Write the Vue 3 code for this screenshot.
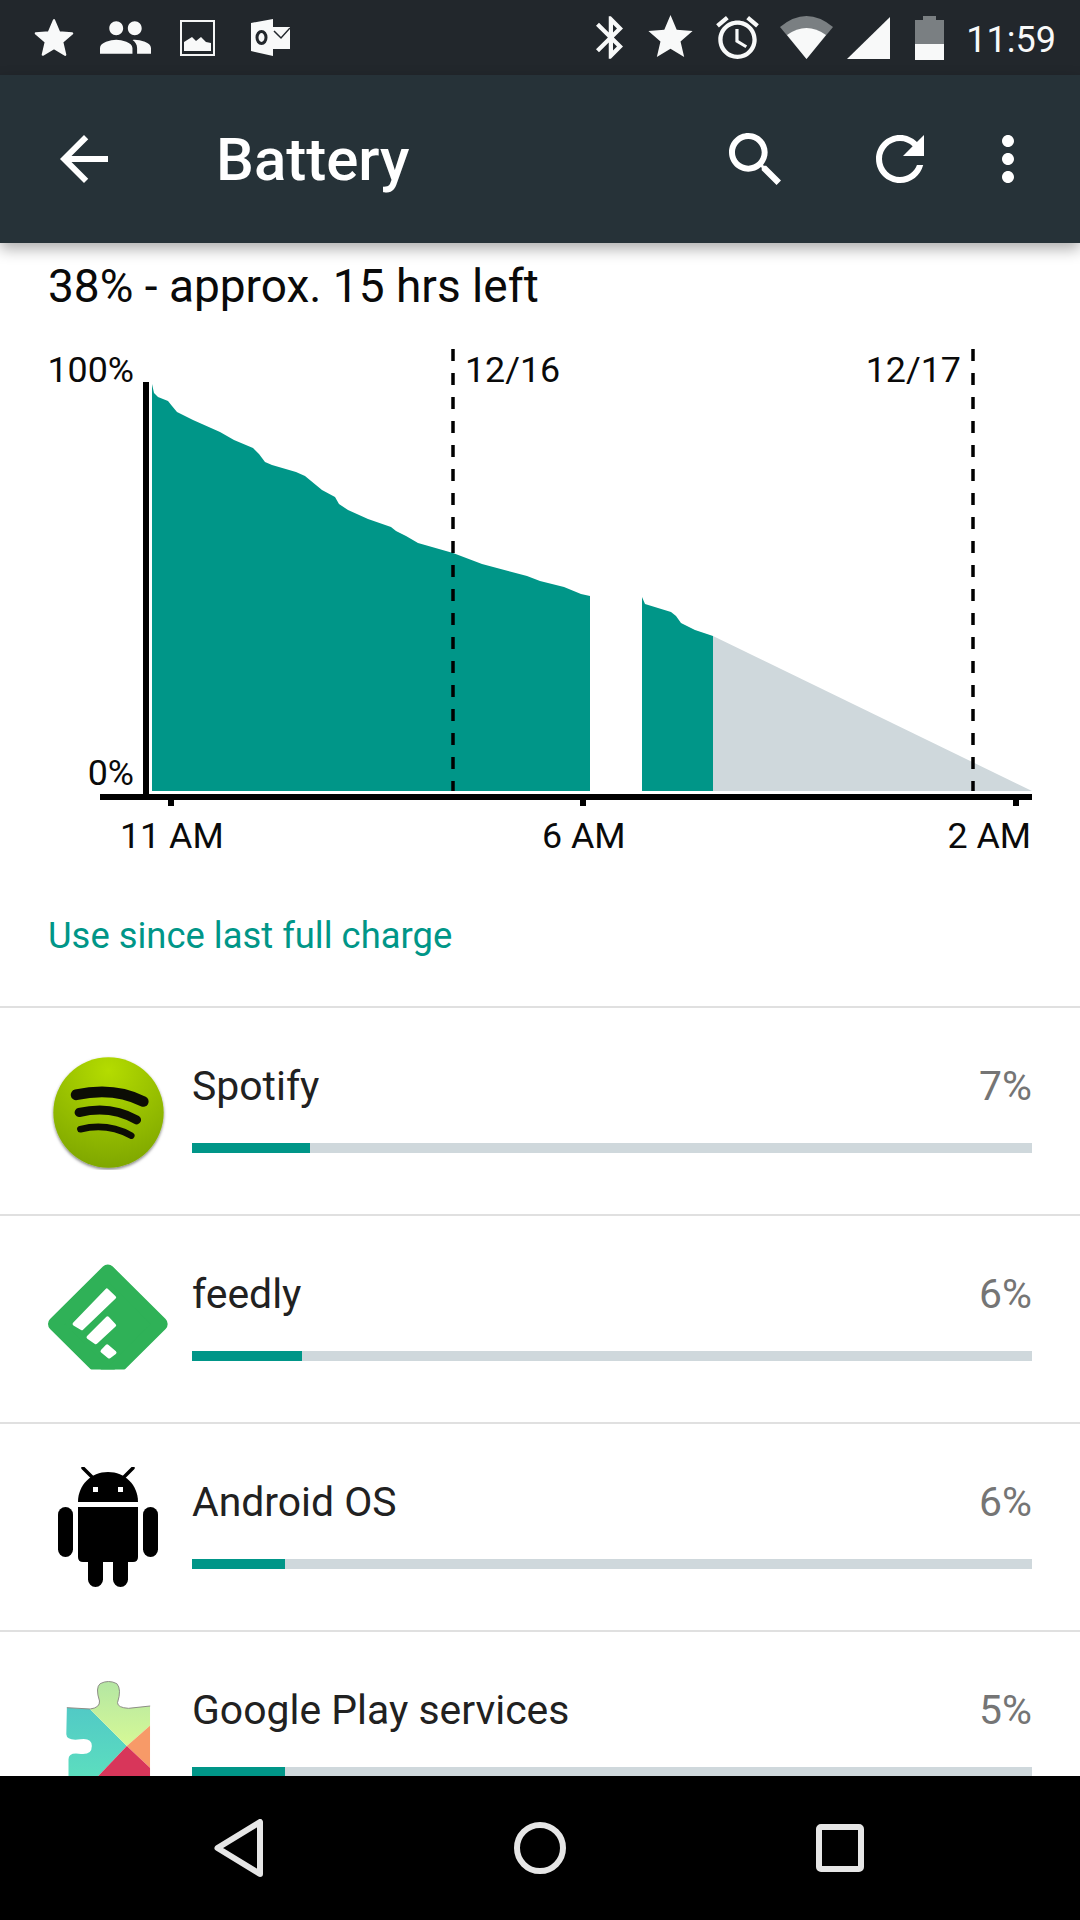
<script setup>
const apps = [
  { name: 'Spotify', pct: '7%', used: 118, icon: 'spotify' },
  { name: 'feedly', pct: '6%', used: 110, icon: 'feedly' },
  { name: 'Android OS', pct: '6%', used: 93, icon: 'android' },
  { name: 'Google Play services', pct: '5%', used: 93, icon: 'play' }
]
const curveA = '152,791 152,384 154,393 158,397 168,401 172,406 177,412 193,420 220,432 234,440 253,448 259,454 265,462 272,465 296,472 305,476 322,490 335,497 339,504 348,510 368,519 391,527 396,531 406,536 418,543 453,553 482,564 527,576 540,581 564,587 581,594 590,596 590,791'
const curveB = '642,791 642,597 645,604 671,612 676,616 681,623 695,630 713,636 713,791'
</script>

<template>
  <div class="phone">
    <header class="status">
      <svg class="s-star" viewBox="1 1 22 21"><path class="wh rounded" d="M12 17.27L18.18 21l-1.64-7.03L22 9.24l-7.19-.61L12 2 9.19 8.63 2 9.24l5.46 4.73L5.82 21z"/></svg>
      <svg class="s-people" viewBox="1 5 22 14"><path class="wh" d="M16 11c1.66 0 2.99-1.34 2.99-3S17.66 5 16 5c-1.66 0-3 1.34-3 3s1.34 3 3 3zm-8 0c1.66 0 2.99-1.34 2.99-3S9.66 5 8 5C6.34 5 5 6.34 5 8s1.34 3 3 3zm0 2c-2.33 0-7 1.17-7 3.5V19h14v-2.5c0-2.33-4.67-3.5-7-3.5zm8 0c-.29 0-.62.02-.97.05 1.16.84 1.97 1.97 1.97 3.45V19h6v-2.5c0-2.33-4.67-3.5-7-3.5z"/></svg>
      <svg class="s-image" viewBox="0 0 35 36"><rect x="1" y="1" width="33" height="34" fill="none" stroke="#f4f5f5" stroke-width="2"/><path class="wh" d="M4 31V22L12 17 16 21 21 17 26 22 31 23V31z"/></svg>
      <svg class="s-outlook" viewBox="0 0 39 37"><path class="wh" d="M0 4L22 0V37L0 32z"/><ellipse cx="10.500" cy="18.500" rx="4.500" ry="6" fill="none" stroke="#22272c" stroke-width="3"/><path class="wh" d="M22 8H39V30H22z"/><path d="M23 12L30 19 39 9" fill="none" stroke="#22272c" stroke-width="1.500"/></svg>
      <span class="spacer"></span>
      <svg class="s-bt" viewBox="5 2 12.710 20"><path class="wh" d="M17.710 7.710L12 2h-1v7.590L6.410 5 5 6.410 10.590 12 5 17.590 6.410 19 11 14.410V22h1l5.710-5.710-4.300-4.290 4.300-4.290zM13 5.830l1.880 1.880L13 9.590V5.830zm1.880 10.460L13 18.170v-3.760l1.880 1.880z"/></svg>
      <svg class="s-star2" viewBox="2 2 20 19"><path class="wh" d="M12 17.270L18.180 21l-1.640-7.030L22 9.240l-7.190-.61L12 2 9.190 8.630 2 9.240l5.460 4.730L5.820 21z"/></svg>
      <svg class="s-alarm" viewBox="2 1.860 20 20.140"><path class="wh" d="M22 5.720l-4.600-3.860-1.290 1.530 4.600 3.860L22 5.720zM7.880 3.390L6.600 1.860 2 5.710l1.290 1.530 4.590-3.850zM12.500 8H11v6l4.750 2.850.75-1.230-4-2.370V8zM12 4c-4.970 0-9 4.030-9 9s4.020 9 9 9c4.970 0 9-4.030 9-9s-4.030-9-9-9zm0 16c-3.870 0-7-3.130-7-7s3.130-7 7-7 7 3.130 7 7-3.130 7-7 7z"/></svg>
      <svg class="s-wifi" viewBox="0 0 53 43"><path class="dim" d="M0 11Q26.500 -11 53 11L26.500 43z"/><path class="wh" d="M7 19Q26.500 5 46 19L26.500 43z"/></svg>
      <svg class="s-signal" viewBox="0 0 43 42"><path class="wh" d="M0 42L43 0V42z"/></svg>
      <svg class="s-batt" viewBox="0 0 29 44"><path class="dim" d="M8 0H21V4H29V28H0V4H8z"/><path class="wh" d="M0 28H29V44H0z"/></svg>
      <span class="time">11:59</span>
    </header>

    <nav class="toolbar">
      <svg class="t-back" viewBox="4 4 16 16"><path class="wh2" d="M20 11H7.830l5.590-5.590L12 4l-8 8 8 8 1.410-1.410L7.830 13H20v-2z"/></svg>
      <h1 class="title">Battery</h1>
      <svg class="t-search" viewBox="3 3 17.490 17.490"><path class="wh2" d="M15.500 14h-.79l-.28-.27C15.410 12.590 16 11.110 16 9.500 16 5.910 13.090 3 9.500 3S3 5.910 3 9.500 5.910 16 9.500 16c1.610 0 3.090-.59 4.230-1.570l.27.28v.79l5 4.990L20.490 19l-4.990-5zm-6 0C7.010 14 5 11.990 5 9.500S7.010 5 9.500 5 14 7.010 14 9.500 11.990 14 9.500 14z"/></svg>
      <svg class="t-refresh" viewBox="4 4 16 16"><path class="wh2" d="M17.650 6.350C16.200 4.900 14.210 4 12 4c-4.420 0-7.990 3.580-7.990 8s3.570 8 7.990 8c3.730 0 6.840-2.550 7.730-6h-2.080c-.82 2.330-3.040 4-5.650 4-3.310 0-6-2.690-6-6s2.690-6 6-6c1.660 0 3.140.69 4.220 1.780L13 11h7V4l-2.350 2.350z"/></svg>
      <svg class="t-more" viewBox="10 4 4 16"><path class="wh2" d="M12 8c1.100 0 2-.9 2-2s-.9-2-2-2-2 .9-2 2 .9 2 2 2zm0 2c-1.100 0-2 .9-2 2s.9 2 2 2 2-.9 2-2-.9-2-2-2zm0 6c-1.100 0-2 .9-2 2s.9 2 2 2 2-.9 2-2-.9-2-2-2z"/></svg>
    </nav>

    <main class="content">
      <p class="summary">38% - approx. 15 hrs left</p>

      <svg class="chart" viewBox="0 340 1080 480">
        <polygon class="fill" :points="curveA"/>
        <polygon class="fill" :points="curveB"/>
        <polygon class="rest" points="713,636 1032,791 713,791"/>
        <line class="dash" x1="453" y1="349" x2="453" y2="791"/>
        <line class="dash" x1="973" y1="349" x2="973" y2="791"/>
        <rect x="143" y="382" width="6" height="414" class="ink"/>
        <rect x="100" y="794" width="932" height="6" class="ink"/>
        <rect x="168" y="800" width="6" height="6" class="ink"/>
        <rect x="580" y="800" width="6" height="6" class="ink"/>
        <rect x="1013" y="800" width="6" height="6" class="ink"/>
      </svg>
      <div class="axis-labels">
        <span class="lbl l-100">100%</span>
        <span class="lbl l-0">0%</span>
        <span class="lbl l-d1">12/16</span>
        <span class="lbl l-d2">12/17</span>
        <span class="lbl l-11">11 AM</span>
        <span class="lbl l-6">6 AM</span>
        <span class="lbl l-2">2 AM</span>
      </div>

      <p class="since">Use since last full charge</p>

      <ul class="list">
        <li v-for="app in apps" :key="app.name" class="row">
          <div class="icon">
            <svg v-if="app.icon === 'spotify'" class="i-spotify" viewBox="149 65 350 350">
              <defs>
                <radialGradient id="spot" cx="50%" cy="12%" r="95%">
                  <stop offset="0" stop-color="#b4dc00"/>
                  <stop offset="1" stop-color="#7ba300"/>
                </radialGradient>
                <filter id="spotShadow" x="-10%" y="-10%" width="120%" height="120%">
                  <feDropShadow dx="0" dy="5" stdDeviation="4" flood-color="#000" flood-opacity="0.5"/>
                </filter>
              </defs>
              <circle cx="324" cy="243" r="165" fill="url(#spot)" filter="url(#spotShadow)"/>
              <g fill="none" stroke="#0c0d05" stroke-linecap="round">
                <path d="M227 190Q340 165 428 210" stroke-width="32"/>
                <path d="M236 243Q330 220 408 265" stroke-width="27"/>
                <path d="M240 293Q320 273 392 312" stroke-width="20"/>
              </g>
            </svg>
            <svg v-else-if="app.icon === 'feedly'" class="i-feedly" viewBox="140 685 370 360">
              <defs>
                <clipPath id="feedClip"><rect x="130" y="680" width="390" height="337"/></clipPath>
              </defs>
              <g clip-path="url(#feedClip)">
                <polygon points="323,722 482,880 323,1038 164,880" fill="#2fb157" stroke="#2fb157" stroke-width="42" stroke-linejoin="round"/>
              </g>
              <g fill="#fff" stroke="#fff" stroke-width="10" stroke-linejoin="round">
                <polygon points="222,880 320,778 343,800 245,894"/>
                <polygon points="264,920 322,862 343,884 287,936"/>
                <polygon points="306,962 321,946 344,966 327,979"/>
              </g>
            </svg>
            <svg v-else-if="app.icon === 'android'" class="i-android" viewBox="0 0 100 120">
              <g fill="#000">
                <path d="M20 35C20 18 33 5 50 5S80 18 80 35z"/>
                <path d="M20 40H80V90Q80 95 75 95H70V112.500A7.500 7.500 0 0 1 55 112.500V95H45V112.500A7.500 7.500 0 0 1 30 112.500V95H25Q20 95 20 90z"/>
                <rect x="0" y="40" width="15" height="50" rx="7.500"/>
                <rect x="85" y="40" width="15" height="50" rx="7.500"/>
              </g>
              <path d="M25 1L34 10M75 1L66 10" stroke="#000" stroke-width="3.500" stroke-linecap="round"/>
              <rect x="35" y="20" width="5" height="5" fill="#fff"/>
              <rect x="60" y="20" width="5" height="5" fill="#fff"/>
            </svg>
            <svg v-else class="i-play" viewBox="195 702 260 360">
              <defs>
                <clipPath id="puzzle">
                  <path d="M200 800L270 804Q300 800 298 780Q285 740 300 728Q325 715 350 728Q365 745 352 785Q352 800 385 802L450 795V1062H205V1000V955Q205 935 235 938Q275 945 275 915Q275 890 240 895Q200 900 198 880z"/>
                </clipPath>
                <linearGradient id="pzTeal" x1="0" y1="0" x2="0" y2="1">
                  <stop offset="0" stop-color="#4cc0c9"/>
                  <stop offset="1" stop-color="#5fe3bd"/>
                </linearGradient>
                <linearGradient id="pzLime" x1="0" y1="0" x2="0" y2="1">
                  <stop offset="0" stop-color="#b0e4a4"/>
                  <stop offset="1" stop-color="#d6f996"/>
                </linearGradient>
              </defs>
              <g clip-path="url(#puzzle)">
                <polygon points="190,700 190,1062 240,1062 380,915 265,800" fill="url(#pzTeal)"/>
                <polygon points="265,800 380,915 460,845 460,700 265,700" fill="url(#pzLime)"/>
                <polygon points="380,915 460,845 460,990" fill="#f79a68"/>
                <polygon points="380,915 460,990 460,1062 240,1062" fill="#d8365a"/>
              </g>
              <path d="M200 800L270 804Q300 800 298 780Q285 740 300 728Q325 715 350 728Q365 745 352 785Q352 800 385 802L450 795" fill="none" stroke="#8d8d86" stroke-width="3"/>
            </svg>
          </div>
          <div class="info">
            <div class="line">
              <span class="name">{{ app.name }}</span>
              <span class="pct">{{ app.pct }}</span>
            </div>
            <div class="track"><div class="used" :style="{ width: app.used + 'px' }"></div></div>
          </div>
        </li>
      </ul>
    </main>

    <footer class="navbar">
      <div class="slot"><svg class="n-icon" viewBox="0 0 52 58"><path d="M3.500 29L46 3V55z" fill="none" stroke="#e6e6e6" stroke-width="6" stroke-linejoin="round"/></svg></div>
      <div class="slot"><svg class="n-icon" viewBox="0 0 52 58"><circle cx="26" cy="29" r="23" fill="none" stroke="#e6e6e6" stroke-width="6"/></svg></div>
      <div class="slot"><svg class="n-icon" viewBox="0 0 52 58"><rect x="5" y="8" width="42" height="42" rx="2" fill="none" stroke="#e6e6e6" stroke-width="6"/></svg></div>
    </footer>
  </div>
</template>

<style>
html, body { margin: 0; background: #fff; }
</style>

<style scoped>
.phone {
  width: 1080px;
  height: 1920px;
  display: flex;
  flex-direction: column;
  overflow: hidden;
  background: #fff;
  font-family: Roboto, "Liberation Sans", sans-serif;
  color: #111;
}
svg { display: block; flex: none; }
.wh { fill: #f8f9f9; }
.wh2 { fill: #fff; }
.dim { fill: #7a7f82; }
.rounded { stroke: #f8f9f9; stroke-width: 1.2; stroke-linejoin: round; }

.status {
  height: 75px;
  flex: none;
  display: flex;
  align-items: center;
  padding-left: 34px;
  padding-right: 24px;
  background: #22272c;
}
.spacer { flex: 1; }
.s-star { width: 40px; height: 39px; }
.s-people { width: 51px; height: 33px; margin-left: 26px; }
.s-image { width: 35px; height: 36px; margin-left: 29px; }
.s-outlook { width: 39px; height: 37px; margin-left: 36px; }
.s-bt { width: 27px; height: 43px; }
.s-star2 { width: 45px; height: 42px; margin-left: 25px; margin-top: -3px; }
.s-alarm { width: 43px; height: 43px; margin-left: 23px; }
.s-wifi { width: 53px; height: 43px; margin-left: 21px; }
.s-signal { width: 43px; height: 42px; margin-left: 14px; }
.s-batt { width: 29px; height: 44px; margin-left: 25px; }
.time {
  margin-left: 22px;
  font-size: 36px;
  line-height: 42px;
  margin-top: 4px;
  color: #f8f9f9;
}

.toolbar {
  height: 168px;
  flex: none;
  display: flex;
  align-items: center;
  position: relative;
  z-index: 2;
  padding-left: 60px;
  background: #263238;
  box-shadow: 0 6px 14px rgba(0, 0, 0, 0.32);
}
.t-back { width: 48px; height: 48px; }
.title {
  flex: 1;
  margin: 0 0 0 108px;
  font-size: 60px;
  font-weight: 500;
  color: #fff;
}
.t-search { width: 52px; height: 52px; }
.t-refresh { width: 48px; height: 48px; margin-left: 95px; }
.t-more { width: 12px; height: 48px; margin-left: 78px; margin-right: 66px; }

.content {
  flex: 1;
  min-height: 0;
  overflow: hidden;
  position: relative;
}
.summary {
  margin: 0;
  height: 97px;
  padding: 17px 0 0 48px;
  box-sizing: border-box;
  font-size: 46px;
  line-height: 52px;
  color: #0a0a0a;
}
.chart { width: 1080px; height: 480px; }
.fill { fill: #009688; }
.rest { fill: #cfd8dc; }
.ink { fill: #000; }
.dash { stroke: #000; stroke-width: 3.5; stroke-dasharray: 12 12; }

.axis-labels { position: absolute; left: 0; top: 0; width: 1080px; height: 0; }
.lbl {
  position: absolute;
  font-size: 35.800px;
  line-height: 40px;
  color: #0a0a0a;
  white-space: nowrap;
}
.l-100 { right: 946px; top: 107px; }
.l-0 { right: 946px; top: 510px; }
.l-d1 { left: 465px; top: 107px; }
.l-d2 { right: 119px; top: 107px; }
.l-11 { left: 120px; top: 573px; }
.l-6 { left: 542px; top: 573px; }
.l-2 { right: 49px; top: 573px; }

.since {
  margin: 0;
  height: 186px;
  padding: 94px 0 0 48px;
  box-sizing: border-box;
  font-size: 36.400px;
  line-height: 44px;
  color: #009688;
}

.list { margin: 0; padding: 0; list-style: none; }
.row {
  height: 208px;
  box-sizing: border-box;
  border-top: 2px solid #e0e0e0;
  display: flex;
  padding-right: 48px;
}
.icon {
  width: 120px;
  margin: 0 24px 0 48px;
  flex: none;
  display: flex;
  align-items: center;
  justify-content: center;
}
.i-spotify { width: 117px; height: 117px; }
.i-feedly { width: 123px; height: 120px; }
.i-android { width: 100px; height: 120px; }
.i-play { width: 87px; height: 120px; }
.info { flex: 1; padding-top: 50px; }
.line {
  display: flex;
  justify-content: space-between;
  height: 56px;
  line-height: 56px;
  font-size: 40.900px;
}
.name { color: #212121; }
.pct { color: #757575; }
.track { height: 10px; margin-top: 29px; background: #cfd8dc; }
.used { height: 10px; background: #009688; }

.navbar {
  height: 144px;
  flex: none;
  display: flex;
  padding: 0 90px;
  background: #000;
  position: relative;
  z-index: 2;
}
.slot {
  width: 300px;
  display: flex;
  align-items: center;
  justify-content: center;
}
.n-icon { width: 52px; height: 58px; }
</style>
